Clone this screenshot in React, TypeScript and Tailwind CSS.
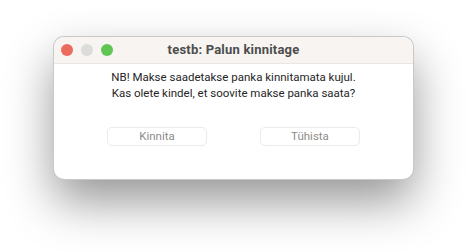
export default function App() {
  return (
    <div className="w-[467px] h-[252px] bg-white pt-[37px] pl-[54px] font-['Roboto',sans-serif]">
      <div className="w-[359px] h-[142px] rounded-[10px] bg-white shadow-[0_22px_48px_rgba(0,0,0,0.42)] ring-1 ring-[#c9c9c9] overflow-hidden flex flex-col">
        {/* Title bar */}
        <div className="relative h-[27px] shrink-0 bg-[#f7f4f2] border-b border-[#e9e6e4] flex items-center justify-center">
          <div className="absolute left-[7px] top-[7px] flex gap-[8px]">
            <span className="w-[12px] h-[12px] rounded-full bg-[#ed6a5e]" />
            <span className="w-[12px] h-[12px] rounded-full bg-[#dcdcdc]" />
            <span className="w-[12px] h-[12px] rounded-full bg-[#61c554]" />
          </div>
          <span className="text-[13px] font-bold text-[#4d4d4d] tracking-[0.2px]">testb: Palun kinnitage</span>
        </div>
        {/* Body */}
        <div className="flex flex-col items-center pt-[5px]">
          <p className="text-[11.5px] leading-[16px] text-[#262626] text-center">
            NB! Makse saadetakse panka kinnitamata kujul.
            <br />
            Kas olete kindel, et soovite makse panka saata?
          </p>
          <div className="flex gap-[53px] mt-[26px]">
            <button className="w-[100px] h-[19px] rounded-[5px] border border-[#ebebeb] bg-white text-[11.5px] text-[#8c8c8c] leading-none">
              Kinnita
            </button>
            <button className="w-[100px] h-[19px] rounded-[5px] border border-[#ebebeb] bg-white text-[11.5px] text-[#8c8c8c] leading-none">
              Tühista
            </button>
          </div>
        </div>
      </div>
    </div>
  )
}
